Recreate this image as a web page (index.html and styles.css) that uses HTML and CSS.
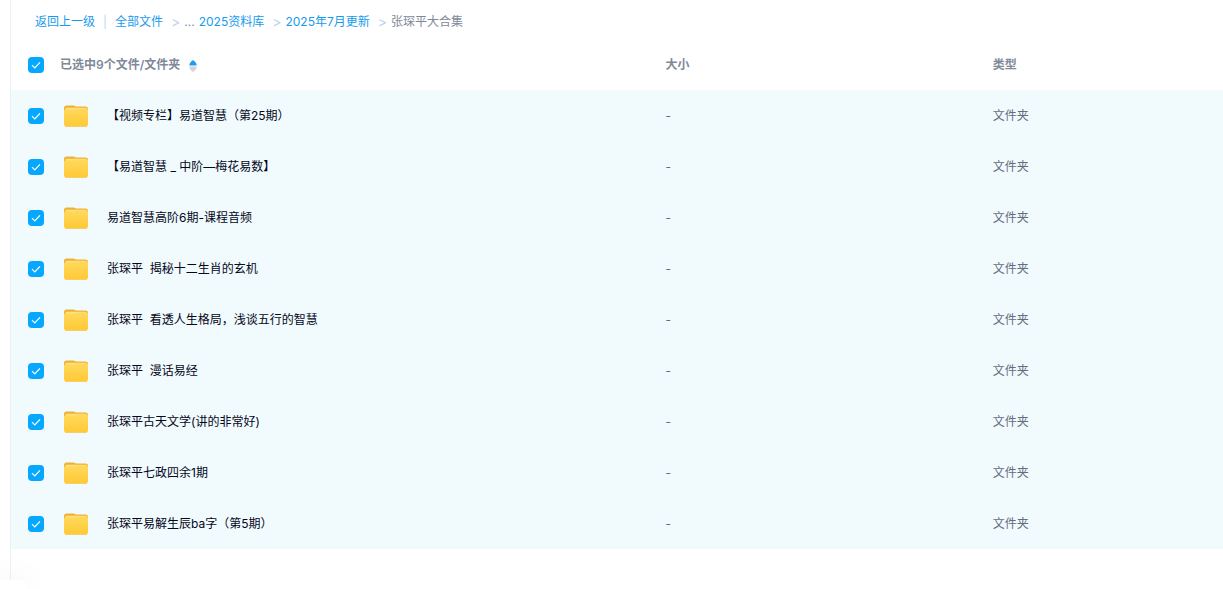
FILE: index.html
```html
<!DOCTYPE html>
<html lang="zh-CN">
<head>
  <meta charset="UTF-8">
  <meta name="viewport" content="width=device-width, initial-scale=1">
  <title>张琛平大合集</title>
  <link rel="stylesheet" href="styles.css">
</head>
<body>
  <svg class="defs" aria-hidden="true">
    <defs>
      <linearGradient id="folderFront" x1="0" y1="0" x2="0" y2="1">
        <stop offset="0" stop-color="#ffd95c"/>
        <stop offset="1" stop-color="#ffc935"/>
      </linearGradient>
      <symbol id="folder" viewBox="0 0 24 22">
        <path d="M0 3Q0 .5 2.500 .5H9.500Q10.600 .5 11.400 1.200L12.200 1.600H21.500Q24 1.600 24 4V12H0Z" fill="#efb233"/>
        <path d="M1.500 4Q1.500 2.800 2.700 2.800H21.300Q22.500 2.800 22.500 4V8H1.500Z" fill="#ffe083"/>
        <path d="M0 6Q0 4.600 1.400 4.600H9.500Q10.500 4.600 11.200 4.100T13 3.600H22.600Q24 3.600 24 5V19.300Q24 21.500 21.800 21.500H2.200Q0 21.500 0 19.300Z" fill="url(#folderFront)"/>
        <path d="M.8 20.900Q1.300 21.500 2.200 21.500H21.800Q22.700 21.500 23.200 20.900Z" fill="#f5ba35"/>
      </symbol>
    </defs>
  </svg>

  <main class="files">
    <nav class="crumbs">
      <a href="#">返回上一级</a>
      <span class="bar">|</span>
      <a href="#">全部文件</a>
      <span class="sep">&gt;</span>
      <span class="dots">...</span>
      <a href="#">2025资料库</a>
      <span class="sep">&gt;</span>
      <a href="#">2025年7月更新</a>
      <span class="sep">&gt;</span>
      <span>张琛平大合集</span>
    </nav>

    <table class="list">
      <thead>
        <tr>
          <th class="col-check"><input type="checkbox" id="all" checked></th>
          <th class="col-name">
            <label for="all">已选中9个文件/文件夹</label>
            <svg class="sort" viewBox="0 0 8 12"><path d="M1 5.500Q0 5.500 .4 4.300Q1.500 1.500 3.300 .5Q4 0 4.700 .5Q6.500 1.500 7.600 4.300Q8 5.500 7 5.500Z" fill="#219dee"/><path d="M1 6.500Q0 6.500 .4 7.700Q1.500 10.500 3.300 11.500Q4 12 4.700 11.500Q6.500 10.500 7.600 7.700Q8 6.500 7 6.500Z" fill="#d0d3de"/></svg>
          </th>
          <th class="col-size">大小</th>
          <th class="col-type">类型</th>
        </tr>
      </thead>
      <tbody>
        <tr>
          <td><input type="checkbox" id="f1" checked></td>
          <td><label class="name" for="f1"><svg class="folder"><use href="#folder"/></svg>【视频专栏】易道智慧（第25期）</label></td>
          <td>-</td>
          <td>文件夹</td>
        </tr>
        <tr>
          <td><input type="checkbox" id="f2" checked></td>
          <td><label class="name" for="f2"><svg class="folder"><use href="#folder"/></svg>【易道智慧 _ 中阶—梅花易数】</label></td>
          <td>-</td>
          <td>文件夹</td>
        </tr>
        <tr>
          <td><input type="checkbox" id="f3" checked></td>
          <td><label class="name" for="f3"><svg class="folder"><use href="#folder"/></svg>易道智慧高阶6期-课程音频</label></td>
          <td>-</td>
          <td>文件夹</td>
        </tr>
        <tr>
          <td><input type="checkbox" id="f4" checked></td>
          <td><label class="name" for="f4"><svg class="folder"><use href="#folder"/></svg>张琛平  揭秘十二生肖的玄机</label></td>
          <td>-</td>
          <td>文件夹</td>
        </tr>
        <tr>
          <td><input type="checkbox" id="f5" checked></td>
          <td><label class="name" for="f5"><svg class="folder"><use href="#folder"/></svg>张琛平  看透人生格局，浅谈五行的智慧</label></td>
          <td>-</td>
          <td>文件夹</td>
        </tr>
        <tr>
          <td><input type="checkbox" id="f6" checked></td>
          <td><label class="name" for="f6"><svg class="folder"><use href="#folder"/></svg>张琛平  漫话易经</label></td>
          <td>-</td>
          <td>文件夹</td>
        </tr>
        <tr>
          <td><input type="checkbox" id="f7" checked></td>
          <td><label class="name" for="f7"><svg class="folder"><use href="#folder"/></svg>张琛平古天文学(讲的非常好)</label></td>
          <td>-</td>
          <td>文件夹</td>
        </tr>
        <tr>
          <td><input type="checkbox" id="f8" checked></td>
          <td><label class="name" for="f8"><svg class="folder"><use href="#folder"/></svg>张琛平七政四余1期</label></td>
          <td>-</td>
          <td>文件夹</td>
        </tr>
        <tr>
          <td><input type="checkbox" id="f9" checked></td>
          <td><label class="name" for="f9"><svg class="folder"><use href="#folder"/></svg>张琛平易解生辰ba字（第5期）</label></td>
          <td>-</td>
          <td>文件夹</td>
        </tr>
      </tbody>
    </table>
  </main>

  <div class="corner"></div>
</body>
</html>
```

FILE: styles.css
```css
* {
  box-sizing: border-box;
}

body {
  margin: 0;
  background: #fff;
  font-family: Inter, "Noto Sans CJK SC", sans-serif;
  font-size: 12px;
  line-height: 18px;
  color: #636d7e;
}

.defs {
  position: absolute;
  width: 0;
  height: 0;
}

.files {
  min-height: 100vh;
  margin-left: 10px;
  border-left: 1px solid #eef0f2;
}

.crumbs {
  display: flex;
  align-items: center;
  height: 40px;
  padding: 3px 24px 0;
  color: #818999;
}

.crumbs a {
  color: #169bee;
  text-decoration: none;
}

.bar {
  margin: 0 8px;
  color: #c0d8ee;
}

.sep {
  margin: 0 4px 0 8px;
  font-size: 14px;
  color: #bfd5ef;
}

.dots {
  margin-right: 4px;
}

.list {
  width: 100%;
  table-layout: fixed;
  border-collapse: collapse;
}

th, td {
  padding: 0;
  text-align: left;
  vertical-align: middle;
}

th {
  height: 50px;
  font-weight: 600;
  color: #818999;
}

td {
  height: 51px;
}

tbody tr {
  background: #f1fafd;
}

.col-check {
  width: 49px;
}

.col-size {
  width: 27%;
}

.col-type {
  width: 19%;
}

th:first-child, td:first-child {
  padding-left: 17px;
}

input[type="checkbox"] {
  display: block;
  appearance: none;
  width: 16px;
  height: 16px;
  margin: 0;
  border: 1px solid #c8d0dc;
  border-radius: 4px;
}

input[type="checkbox"]:checked {
  border: 0;
  background: #06a7ff url("data:image/svg+xml,%3Csvg xmlns='http://www.w3.org/2000/svg' viewBox='0 0 16 16'%3E%3Cpath d='M4 8.200l2.800 2.800L12 5.300' fill='none' stroke='%23fff' stroke-width='1.200'/%3E%3C/svg%3E") center / 16px no-repeat;
}

.sort {
  width: 8px;
  height: 12px;
  margin-left: 6px;
  vertical-align: middle;
}

.name {
  display: flex;
  align-items: center;
  padding-left: 4px;
  color: #03081a;
  white-space: pre;
}

.folder {
  width: 24px;
  height: 22px;
  margin-right: 19px;
}

/* floating panel peeking in from the bottom left */
.corner {
  position: fixed;
  left: 0;
  bottom: 0;
  width: 27px;
  height: 9px;
  background: #fff;
  border-top-right-radius: 8px;
  box-shadow: 0 0 30px rgba(0, 0, 0, 0.1);
}
```
